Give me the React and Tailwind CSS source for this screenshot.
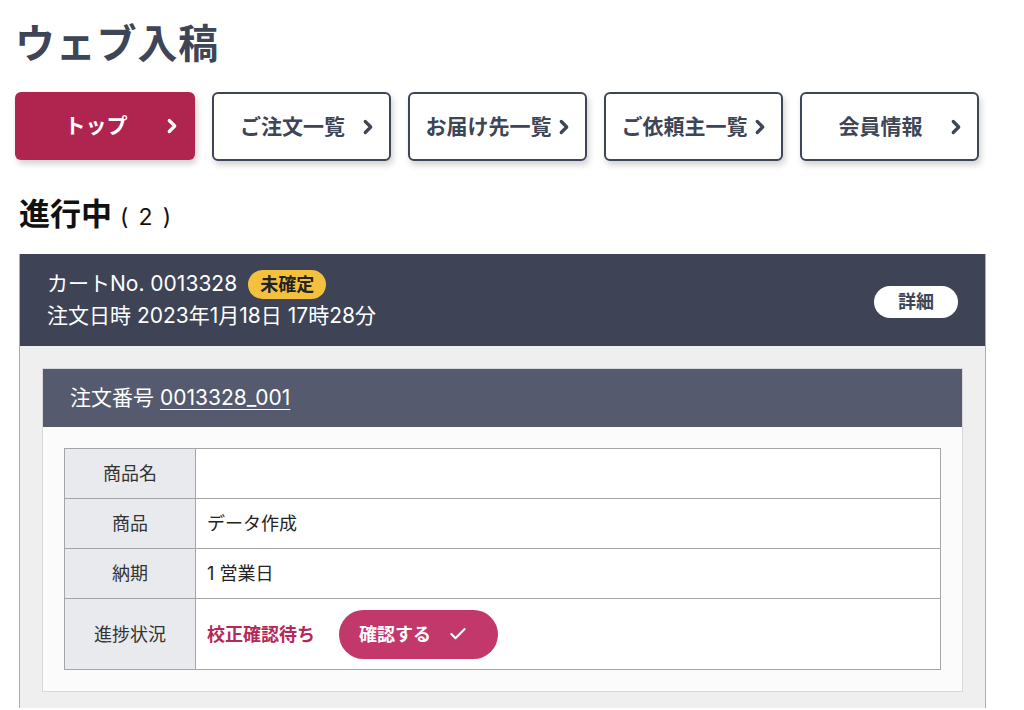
import { ChevronRight, Check } from "lucide-react";

const navItems = [
  { label: "トップ", active: true },
  { label: "ご注文一覧" },
  { label: "お届け先一覧" },
  { label: "ご依頼主一覧" },
  { label: "会員情報" },
];

const rows = [
  { label: "商品名", value: "" },
  { label: "商品", value: "データ作成" },
  { label: "納期", value: "1 営業日" },
];

function NavButton({ label, active }) {
  return (
    <a
      className={
        active
          ? "flex items-center w-[180px] h-[68px] rounded-[6px] bg-[#b0254f] text-white pl-4 pr-3 shadow-[2px_4px_6px_rgba(0,0,0,0.18)]"
          : "flex items-center w-[179px] h-[69px] rounded-[6px] border-2 border-[#3d4556] bg-white text-[#3d4556] pl-[14px] pr-[10px] shadow-[2px_4px_6px_rgba(0,0,0,0.18)]"
      }
    >
      <span className="flex-1 text-center text-[21px] font-bold">{label}</span>
      <ChevronRight className="w-[22px] h-[22px] shrink-0" strokeWidth={3.5} />
    </a>
  );
}

export default function App() {
  return (
    <div className="min-h-[710px] bg-white font-['Inter','Noto_Sans_CJK_JP',sans-serif] text-[#222]">
      <div className="pl-[15px] pt-[18px]">
        <h1 className="text-[40px] font-bold leading-[52px] text-[#3d4556] tracking-[0.02em]">ウェブ入稿</h1>

        <nav className="flex gap-[17px] mt-[22px]">
          {navItems.map((item) => (
            <NavButton key={item.label} {...item} />
          ))}
        </nav>

        <h2 className="mt-[34px] ml-[4px] flex items-baseline gap-[8px] text-[31px] font-bold leading-[38px] text-[#111]">
          進行中<span className="text-[23px] font-normal tracking-[0.08em]">( 2 )</span>
        </h2>

        <section className="mt-[18px] ml-[4px] w-[967px] border-x border-[#a9acb3] bg-[#efefef] pb-[16px]">
          <header className="flex items-center justify-between bg-[#3e4455] h-[92px] pl-[27px] pr-[27px] text-white">
            <div className="text-[21px] leading-[32px]">
              <div className="flex items-center gap-[11px]">
                <span>カートNo. 0013328</span>
                <span className="rounded-full bg-[#f4c13f] px-[12px] text-[18px] font-bold leading-[29px] text-[#222]">未確定</span>
              </div>
              <div>注文日時 2023年1月18日 17時28分</div>
            </div>
            <button className="mt-[3px] w-[84px] h-[32px] rounded-full bg-white text-[18px] font-bold text-[#3d4556]">詳細</button>
          </header>

          <div className="mx-[22px] mt-[22px] border border-[#d8d8d8] bg-[#fbfbfb]">
            <div className="bg-[#555a6e] h-[58px] flex items-center pl-[27px] text-[21px] text-white">
              注文番号&nbsp;<span className="underline underline-offset-[4px] decoration-1">0013328_001</span>
            </div>
            <div className="px-[21px] pt-[21px] pb-[21px]">
              <table className="w-full border-collapse text-[18px]">
                <tbody>
                  {rows.map((r) => (
                    <tr key={r.label} className="h-[50px]">
                      <th className="w-[131px] border border-[#a5a5a5] bg-[#e8eaee] font-normal text-[#333]">{r.label}</th>
                      <td className="border border-[#a5a5a5] bg-white pl-[11px] text-[#222]">{r.value}</td>
                    </tr>
                  ))}
                  <tr className="h-[71px]">
                    <th className="w-[131px] border border-[#a5a5a5] bg-[#e8eaee] font-normal text-[#333]">進捗状況</th>
                    <td className="border border-[#a5a5a5] bg-white pl-[11px]">
                      <div className="flex items-center gap-[24px]">
                        <span className="font-bold text-[#b5285a]">校正確認待ち</span>
                        <button className="flex items-center gap-[17px] h-[49px] rounded-full bg-[#c2386a] pl-[20px] pr-[30px] text-[18px] font-bold text-white">
                          確認する
                          <Check className="w-[20px] h-[20px]" strokeWidth={2.5} />
                        </button>
                      </div>
                    </td>
                  </tr>
                </tbody>
              </table>
            </div>
          </div>
        </section>
      </div>
    </div>
  );
}
